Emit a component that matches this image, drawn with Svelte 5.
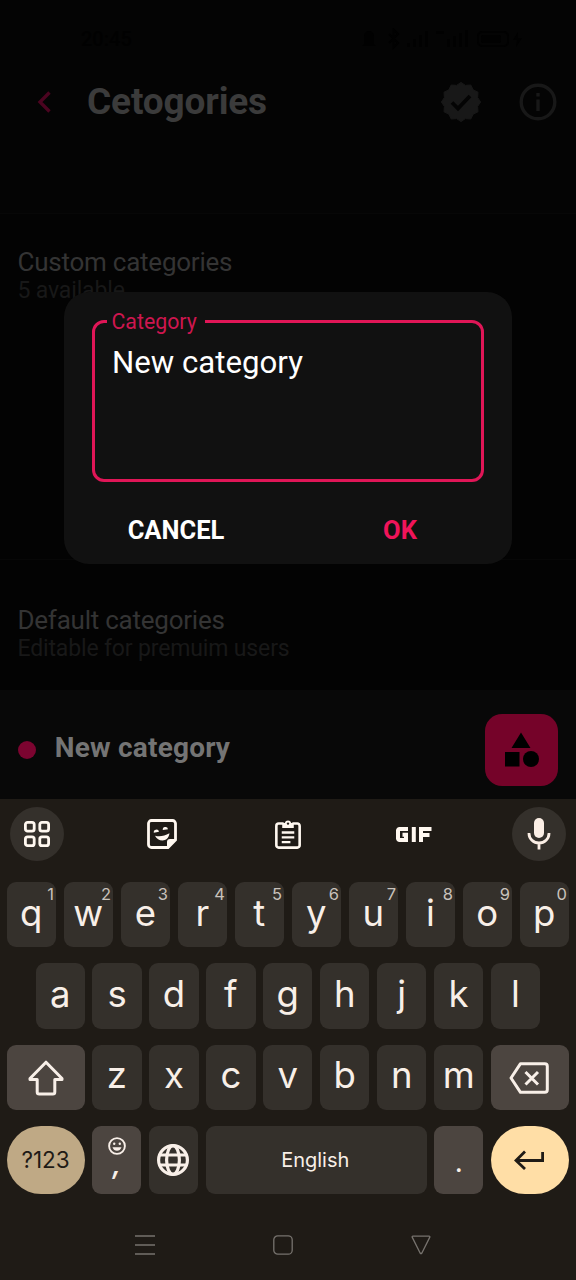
<script>
  const digits = '1234567890';
  const top = 'qwertyuiop'.split('').map((k, i) => ({ k, d: digits[i] }));
  const home = 'asdfghjkl'.split('');
  const bottom = 'zxcvbnm'.split('');

  // Twelve-lobed outline of the verified badge.
  const badge = Array.from({ length: 24 }, (_, i) => {
    const r = i % 2 ? 17.2 : 19.6;
    const a = (i * Math.PI) / 12;
    return `${(20 + r * Math.cos(a)).toFixed(2)},${(20 + r * Math.sin(a)).toFixed(2)}`;
  }).join(' ');
</script>

<div class="screen">
  <div class="app">
    <div class="status">
      <span class="time">20:45</span>
      <svg width="170" height="22" viewBox="0 0 170 22" fill="#010101">
        <path d="M4 16V8a5 5 0 0 1 10 0v8l2 2H2z" />
        <path d="M29 6l9 9-4.500 4.500V1.500L38 6l-9 9" fill="none" stroke="#010101" stroke-width="2" />
        <path d="M47 15h3v4h-3zM53 11h3v8h-3zM59 7h3v12h-3zM65 3h3v16h-3z" />
        <path d="M76 3h8v3h-8zM87 11h3v8h-3zM93 8h3v11h-3zM99 5h3v14h-3zM105 2h3v17h-3z" />
        <rect x="118" y="4" width="30" height="14" rx="4" fill="none" stroke="#010101" stroke-width="2" />
        <rect x="121" y="7" width="20" height="8" rx="2" />
        <path d="M158 4l-5 8h4l-1 7 6-9h-4z" />
      </svg>
    </div>
    <header>
      <svg class="back" width="16" height="24" viewBox="0 0 16 24" fill="none" stroke="#4b0420" stroke-width="3.400"><path d="M13.500 2.500 4 12l9.500 9.500" /></svg>
      <h1>Cetogories</h1>
      <svg class="verified" width="40" height="40" viewBox="0 0 40 40">
        <polygon points={badge} fill="#181818" stroke="#181818" stroke-linejoin="round" />
        <path d="M11 20.500l6 6L29 14" fill="none" stroke="#040404" stroke-width="3.800" />
      </svg>
      <svg width="38" height="38" viewBox="0 0 38 38" fill="none" stroke="#181818" stroke-width="3.400"><circle cx="19" cy="19" r="16.800" /><path d="M19 16.500V28M19 10v3.600" /></svg>
    </header>
    <section class="custom">
      <h2>Custom categories</h2>
      <p>5 available</p>
    </section>
    <section class="default">
      <h2>Default categories</h2>
      <p>Editable for premuim users</p>
    </section>
    <div class="item">
      <i class="dot"></i>
      <b>New category</b>
      <div class="fab">
        <svg width="36" height="36" viewBox="0 0 36 36" fill="#000"><path d="M18 1.500 27.500 17H8.500zM2 21h14.500v14.500H2z" /><circle cx="28" cy="28" r="8" /></svg>
      </div>
    </div>
  </div>

  <div class="dialog">
    <div class="field">
      <span class="label">Category</span>
      <span class="value">New category</span>
    </div>
    <div class="actions"><span>CANCEL</span><span class="ok">OK</span></div>
  </div>

  <div class="keyboard">
    <div class="tools">
      <div class="tool round">
        <svg width="26" height="26" viewBox="0 0 26 26" fill="none" stroke="#fff8f0" stroke-width="2.800"><rect x="1.400" y="1.400" width="8.800" height="8.800" rx="2.200" /><rect x="15.800" y="1.400" width="8.800" height="8.800" rx="2.200" /><rect x="1.400" y="15.800" width="8.800" height="8.800" rx="2.200" /><rect x="15.800" y="15.800" width="8.800" height="8.800" rx="2.200" /></svg>
      </div>
      <div class="tool plain">
        <svg width="30" height="30" viewBox="0 0 30 30"><path d="M4.500 1.500h21a3 3 0 0 1 3 3V21l-7.500 7.500H4.500a3 3 0 0 1-3-3v-21a3 3 0 0 1 3-3z" fill="none" stroke="#fff8f0" stroke-width="2.800" /><path d="M20 29v-6a3 3 0 0 1 3-3h6.500z" fill="#fff8f0" /><path d="M8 16.800c5 1.200 9.500.2 14.500-2.500-.8 5-3.500 7.200-7 7.200-3.200 0-6-1.600-7.500-4.700z" fill="#fff8f0" /><path d="M6.800 13.700a2.600 2.600 0 0 1 5.200-.9zM15.800 11.100a2.600 2.600 0 0 1 5.200-.9z" fill="#fff8f0" /></svg>
      </div>
      <div class="tool plain clip">
        <svg width="26" height="30" viewBox="0 0 27 30" preserveAspectRatio="none" fill="none" stroke="#fff8f0" stroke-width="2.700"><path d="M9 4.500H3.800a2.400 2.400 0 0 0-2.400 2.400v19.300a2.400 2.400 0 0 0 2.400 2.400h19.400a2.400 2.400 0 0 0 2.400-2.400V6.900a2.400 2.400 0 0 0-2.400-2.400H18" /><path d="M7.500 4h2.600a3.600 3.600 0 0 1 6.800 0h2.600v5h-12z" fill="#fff8f0" stroke="none" /><circle cx="13.500" cy="4.600" r="1.200" fill="#1f1b16" stroke="none" /><path d="M7 13.500h13M7 18.300h13M7 23.100h9" stroke-width="2.300" /></svg>
      </div>
      <div class="tool">
        <svg width="37" height="17" viewBox="0 0 37 17" fill="none" stroke="#fff8f0"><path d="M13 3H4.500A1.500 1.500 0 0 0 3 4.500v8A1.500 1.500 0 0 0 4.500 14H11V8.800H7.500M18.800 1v15M26 16V3h10.500M26 9h8.500" stroke-width="4" /></svg>
      </div>
      <div class="tool round">
        <svg width="24" height="32" viewBox="0 0 24 32"><rect x="7" y="0" width="10" height="20" rx="5" fill="#fbeee5" /><path d="M2 15v.5a10 9.500 0 0 0 20 0V15M12 25v6.500" fill="none" stroke="#fbeee5" stroke-width="2.800" /></svg>
      </div>
    </div>

    <div class="row r1">
      {#each top as { k, d }}<div class="key">{k}<sup>{d}</sup></div>{/each}
    </div>
    <div class="row r2">
      {#each home as k}<div class="key">{k}</div>{/each}
    </div>
    <div class="row r3">
      <div class="key wide mod">
        <svg width="36" height="36" viewBox="0 0 36 36" fill="none" stroke="#f8efe8" stroke-width="3" stroke-linejoin="round"><path d="M18 2.200 34 18.500v1h-7.200V32a2 2 0 0 1-2 2H11.200a2 2 0 0 1-2-2V19.500H2v-1z" /></svg>
      </div>
      {#each bottom as k}<div class="key">{k}</div>{/each}
      <div class="key wide mod">
        <svg class="del" width="40" height="32" viewBox="0 0 40 32" fill="none" stroke="#f8efe8" stroke-width="3" stroke-linejoin="round"><path d="M11.500 1.700h24.300a2.500 2.500 0 0 1 2.500 2.500v23.600a2.500 2.500 0 0 1-2.500 2.500H11.500L2 16z" /><path d="M16.500 10l12.500 12.500M29 10 16.500 22.500" /></svg>
      </div>
    </div>
    <div class="row r4">
      <div class="key wide sym">?123</div>
      <div class="key mod comma">
        <svg width="18" height="18" viewBox="0 0 18 18"><circle cx="9" cy="9" r="7.900" fill="none" stroke="#f8efe8" stroke-width="1.900" /><circle cx="6.200" cy="6.700" r="1.200" fill="#f8efe8" /><circle cx="11.800" cy="6.700" r="1.200" fill="#f8efe8" /><path d="M4.500 10.300h9c-.8 2.400-2.500 3.500-4.500 3.500s-3.700-1.100-4.500-3.500z" fill="#f8efe8" /></svg>
        <span>,</span>
      </div>
      <div class="key">
        <svg class="globe" width="32" height="32" viewBox="0 0 32 32" fill="none" stroke="#f8efe8" stroke-width="3.200"><circle cx="16" cy="16" r="14.400" /><ellipse cx="16" cy="16" rx="6.400" ry="14.400" /><path d="M3 11h26M3 21h26" /></svg>
      </div>
      <div class="key space">English</div>
      <div class="key mod period">.</div>
      <div class="key wide enter">
        <svg width="30" height="20" viewBox="0 0 30 20" fill="none" stroke="#1f1b16" stroke-width="2.800"><path d="M28.600 2v8.500H2.500M11 1.500 2 10.500l9 8.500" /></svg>
      </div>
    </div>

    <nav>
      <svg width="20" height="20" viewBox="0 0 20 20" stroke="#77736e" stroke-width="1.500"><path d="M0 1h20M0 10h20M0 19h20" /></svg>
      <svg width="20" height="20" viewBox="0 0 20 20" fill="none" stroke="#77736e" stroke-width="1.300"><rect x=".8" y=".8" width="18.400" height="18.400" rx="4" /></svg>
      <svg width="20" height="20" viewBox="0 0 20 20" fill="none" stroke="#77736e" stroke-width="1.300" stroke-linejoin="round"><path d="M2 1.200h16q1.300 0 .7 1.200l-7.800 15.600q-.9 1.200-1.800 0L1.300 2.400Q.7 1.200 2 1.200z" /></svg>
    </nav>
  </div>
</div>

<style>
  :global(body) { margin: 0; background: #040404; }
  .screen { position: relative; width: 576px; height: 1280px; overflow: hidden; font-family: Roboto, sans-serif; }
  svg { display: block; flex: none; }
  h1, h2, p { margin: 0; font-weight: 400; }
  .app { height: 799px; background: #040404; }
  .status { height: 76px; box-sizing: border-box; padding: 1px 46px 0 81px; display: flex; align-items: center; justify-content: space-between; }
  .time { color: #010101; font-size: 20px; font-weight: 500; }
  header { height: 137px; box-sizing: border-box; padding: 6px 19.500px 0 36px; display: flex; align-items: flex-start; }
  header svg { margin: 1px 0 0; }
  header .back { margin-top: 8px; }
  header .verified { margin: 0 37.500px 0 0; }
  h1 { flex: 1; margin-left: 35px; color: #3b3b3b; font-size: 37px; line-height: 40px; font-weight: 700; letter-spacing: -0.150px; }
  section { box-sizing: border-box; padding: 32px 17.500px 0; border-top: 1px solid #070707; background: #030303; }
  .custom { height: 346px; }
  .default { height: 131px; padding-top: 44px; }
  h2 { color: #343434; font-size: 26px; line-height: 32px; letter-spacing: -0.240px; }
  p { color: #181818; font-size: 23px; line-height: 26px; letter-spacing: -0.150px; }
  .item { height: 109px; box-sizing: border-box; padding: 10.500px 18px 0 18px; background: #080808; display: flex; align-items: center; }
  .dot { width: 18px; height: 18px; border-radius: 50%; background: #7c0430; }
  .item b { flex: 1; margin-left: 18.800px; color: #747474; font-size: 28px; line-height: 32px; margin-top: -3px; letter-spacing: 0.200px; }
  .fab { width: 73px; height: 72.500px; border-radius: 17px; background: #750329; display: flex; align-items: center; justify-content: center; }
  .fab svg { margin: 0 2px 1px 0; }

  .dialog { position: absolute; left: 64px; top: 292px; width: 448px; height: 272px; box-sizing: border-box; border-radius: 25px; background: #111; padding: 28px 28px 0; }
  .field { position: relative; height: 162px; box-sizing: border-box; border: 3px solid #e01657; border-radius: 12px; padding: 21px 17px; }
  .label { position: absolute; left: 12px; top: -14px; padding: 0 8px 0 4.500px; background: #111; color: #ce164f; font-size: 21.300px; line-height: 26px; }
  .value { display: block; color: #fff; font-size: 31.200px; line-height: 37px; }
  .actions { display: grid; grid-template-columns: 1fr 1fr; margin: 0 -28px; padding-top: 32px; color: #fff; font-size: 25.500px; line-height: 32px; font-weight: 700; text-align: center; }
  .ok { color: #f0145a; }

  .keyboard { height: 481px; background: #1f1b16; color: #f8efe8; font-family: Inter, sans-serif; }
  .tools { height: 83px; box-sizing: border-box; padding: 8px 10px 0; display: flex; justify-content: space-between; align-items: flex-start; }
  .tool { width: 54px; height: 54px; display: flex; align-items: center; justify-content: center; }
  .plain svg { margin-right: 2px; }
  .clip svg { margin-right: 1px; }
  .round { border-radius: 50%; background: #34302b; }
  .row { display: flex; gap: 7.600px; height: 65.300px; padding: 0 7px 0 6.600px; margin-bottom: 16.100px; }
  .r2 { padding: 0 36px 0 35.500px; }
  .r4 { height: 68px; margin-bottom: 0; }
  .key { position: relative; flex: 1 1 0; min-width: 0; display: flex; align-items: center; justify-content: center; border-radius: 9px; background: #34302b; font-size: 36.500px; line-height: 44px; padding-bottom: 4px; box-sizing: border-box; }
  sup { position: absolute; right: 2px; top: 2px; font-size: 16.500px; line-height: 20px; color: #c9c2bb; }
  .mod { background: #4c4540; }
  .wide { flex: 0 0 78px; padding-bottom: 0; }
  .r3 .wide { padding-top: 1px; }
  .del { margin-right: 2px; }
  .globe { margin-right: 1px; }
  .r4 .key { padding-bottom: 0; flex: 0 0 49.300px; }
  .r4 .wide { flex-basis: 78px; border-radius: 34px; }
  .r4 .space { flex: 1; font-size: 20px; padding-right: 2px; }
  .r4 .sym { background: #bfa985; color: #1f1b16; font-size: 22.500px; }
  .enter { background: #ffdea6; }
  .enter svg { margin-right: 2px; }
  .r4 .comma { flex-direction: column; justify-content: flex-start; padding-top: 11px; }
  .comma span { font-size: 27px; line-height: 28px; height: 28px; font-style: italic; font-weight: 600; margin-top: -4px; }
  .r4 .period { font-size: 28px; padding-top: 4px; }
  nav { display: flex; padding: 41px 145px 0 135px; justify-content: space-between; }
</style>
